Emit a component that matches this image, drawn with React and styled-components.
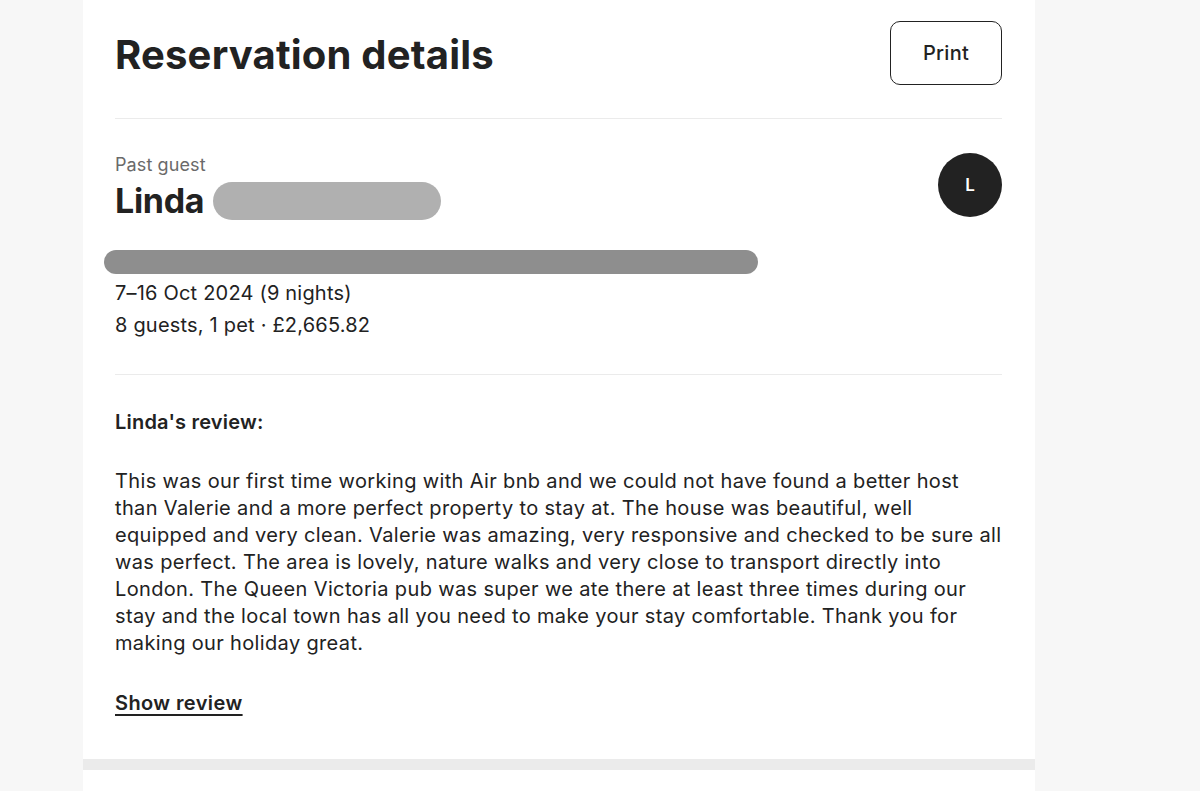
import React from "react";
import styled, { createGlobalStyle } from "styled-components";

const GlobalStyle = createGlobalStyle`
  html, body {
    margin: 0;
    padding: 0;
    background: #f7f7f7;
    font-family: Inter, "Noto Sans", sans-serif;
    color: #222222;
  }
`;

const Page = styled.div`
  display: flex;
  justify-content: flex-start;
  padding-left: 83px;
  min-height: 791px;
`;

const Panel = styled.div`
  width: 952px;
  display: flex;
  flex-direction: column;
`;

const Card = styled.section`
  background: #ffffff;
  padding: 21px 33px 42px 32px;
`;

const Band = styled.div`
  height: 11px;
  background: #ebebeb;
`;

const NextCard = styled.div`
  background: #ffffff;
  flex: 1;
`;

const Header = styled.header`
  display: flex;
  justify-content: space-between;
  align-items: flex-start;
  padding-bottom: 33px;
  border-bottom: 1px solid #ebebeb;
`;

const Title = styled.h1`
  margin: 12px 0 0;
  font-size: 40px;
  font-weight: 700;
  letter-spacing: 0.2px;
  line-height: 44px;
`;

const Button = styled.button`
  width: 112px;
  height: 64px;
  border: 1px solid #222222;
  border-radius: 10px;
  background: #ffffff;
  font-family: inherit;
  font-size: 20px;
  font-weight: 500;
  letter-spacing: 0.3px;
  color: #222222;
`;

const Guest = styled.div`
  position: relative;
  padding: 34px 0 33px;
  border-bottom: 1px solid #ebebeb;
`;

const Label = styled.div`
  font-size: 18px;
  color: #6a6a6a;
  line-height: 24px;
  letter-spacing: 0.1px;
`;

const Name = styled.div`
  display: flex;
  align-items: center;
  gap: 9px;
  margin-top: 4px;
  font-size: 34px;
  font-weight: 700;
  letter-spacing: -0.3px;
  line-height: 40px;
`;

const Pill = styled.span`
  display: block;
  flex: none;
  width: ${p => p.$w}px;
  height: ${p => p.$h}px;
  border-radius: 999px;
  background: ${p => p.$c};
`;

const Address = styled(Pill)`
  margin: 29px 0 0 -11px;
`;

const Avatar = styled.div`
  position: absolute;
  right: 0;
  top: 34px;
  width: 64px;
  height: 64px;
  border-radius: 50%;
  background: #222222;
  color: #ffffff;
  display: flex;
  align-items: center;
  justify-content: center;
  font-size: 17px;
  font-weight: 600;
`;

const Meta = styled.div`
  margin-top: 3px;
  font-size: 20px;
  line-height: 32px;
  letter-spacing: 0.2px;
`;

const Review = styled.div`
  padding-top: 33px;
`;

const ReviewTitle = styled.div`
  font-size: 20px;
  font-weight: 600;
  line-height: 28px;
  letter-spacing: 0.2px;
`;

const Body = styled.p`
  margin: 32px 0 0;
  font-size: 20px;
  line-height: 27px;
  letter-spacing: 0.35px;
`;

const Link = styled.a`
  display: block;
  width: fit-content;
  margin-top: 32px;
  font-size: 20px;
  font-weight: 600;
  line-height: 28px;
  color: #222222;
  text-decoration: underline;
  text-decoration-thickness: 2px;
  text-underline-offset: 4px;
  letter-spacing: 0.4px;
`;

export default function App() {
  return (
    <>
      <GlobalStyle />
      <Page>
        <Panel>
          <Card>
            <Header>
              <Title>Reservation details</Title>
              <Button>Print</Button>
            </Header>
            <Guest>
              <Label>Past guest</Label>
              <Name>
                Linda
                <Pill $w={228} $h={38} $c="#b0b0b0" />
              </Name>
              <Address $w={654} $h={24} $c="#8e8e8e" />
              <Meta>
                <div>7–16 Oct 2024 (9 nights)</div>
                <div>8 guests, 1 pet · £2,665.82</div>
              </Meta>
              <Avatar>L</Avatar>
            </Guest>
            <Review>
              <ReviewTitle>Linda's review:</ReviewTitle>
              <Body>
                This was our first time working with Air bnb and we could not have found a better host
                than Valerie and a more perfect property to stay at. The house was beautiful, well
                equipped and very clean. Valerie was amazing, very responsive and checked to be sure all
                was perfect. The area is lovely, nature walks and very close to transport directly into
                London. The Queen Victoria pub was super we ate there at least three times during our
                stay and the local town has all you need to make your stay comfortable. Thank you for
                making our holiday great.
              </Body>
              <Link href="#">Show review</Link>
            </Review>
          </Card>
          <Band />
          <NextCard />
        </Panel>
      </Page>
    </>
  );
}
